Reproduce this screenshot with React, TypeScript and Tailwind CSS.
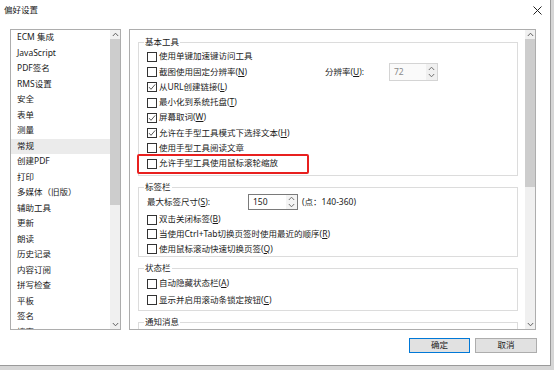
import React from 'react';

const font = "font-['Noto_Sans','Noto_Sans_CJK_SC',sans-serif]";

const navItems = [
  'ECM 集成', 'JavaScript', 'PDF签名', 'RMS设置', '安全', '表单', '测量', '常规', '创建PDF', '打印',
  '多媒体（旧版）', '辅助工具', '更新', '朗读', '历史记录', '内容订阅', '拼写检查', '平板', '签名', '搜索',
];

const Chevron: React.FC<{ up?: boolean; color?: string }> = ({ up, color = '#606060' }) => (
  <svg width="7" height="5" viewBox="0 0 7 5">
    <polyline
      points={up ? '0.8,4 3.5,1.2 6.2,4' : '0.8,1 3.5,3.8 6.2,1'}
      fill="none"
      stroke={color}
      strokeWidth="1"
    />
  </svg>
);

const CheckBox: React.FC<{ checked?: boolean }> = ({ checked }) => (
  <span className="w-[10px] h-[10px] shrink-0 border border-[#333] bg-white flex items-center justify-center">
    {checked && (
      <svg width="8" height="8" viewBox="0 0 8 8">
        <path d="M1 4.1 L3 6.3 L7.2 1.4" fill="none" stroke="#444" strokeWidth="0.9" />
      </svg>
    )}
  </span>
);

// text with the access key underlined, e.g. 截图使用固定分辨率(N)
const Label: React.FC<{ text: string; hotkey?: string; className?: string }> = ({ text, hotkey, className = '' }) => (
  <span className={`whitespace-nowrap ${className}`}>
    {text}
    {hotkey && (
      <>
        (<span className="underline underline-offset-1">{hotkey}</span>)
      </>
    )}
  </span>
);

const Option: React.FC<{ text: string; hotkey?: string; checked?: boolean; h?: string; labelClass?: string; children?: React.ReactNode }> = ({
  text,
  hotkey,
  checked,
  h = 'h-[15.3px]',
  labelClass,
  children,
}) => (
  <div className={`flex items-center gap-[2px] ${h}`}>
    <CheckBox checked={checked} />
    <Label text={text} hotkey={hotkey} className={labelClass} />
    {children}
  </div>
);

const SpinBox: React.FC<{ value: string; disabled?: boolean; w: string; h: string }> = ({ value, disabled, w, h }) => (
  <div
    className={`${w} ${h} shrink-0 flex border ${
      disabled ? 'border-[#d4d4d4] bg-[#fafafa] text-[#8a8a8a]' : 'border-[#7a7a7a] bg-white text-[#1a1a1a]'
    }`}
  >
    <span className="flex-1 flex items-center pl-[4px]">{value}</span>
    <span className={`w-[11px] flex flex-col items-center justify-center gap-[2px] ${disabled ? 'bg-[#f0f0f0]' : 'bg-[#f4f4f4]'}`}>
      <Chevron up color="#707070" />
      <Chevron color="#707070" />
    </span>
  </div>
);

const Group: React.FC<{ title: string; className?: string; children?: React.ReactNode }> = ({ title, className = '', children }) => (
  <fieldset className={`border border-[#dcdcdc] px-[8px] ${className}`}>
    <legend className="ml-[-3px] px-[1px] leading-[10px] text-[#1a1a1a]">{title}</legend>
    {children}
  </fieldset>
);

const ScrollBar: React.FC<{ thumb: string }> = ({ thumb }) => (
  <div className="w-[10px] shrink-0 bg-[#f0f0f0] flex flex-col">
    <div className="h-[9px] flex items-center justify-center">
      <Chevron up />
    </div>
    <div className="flex-1">
      <div className={`${thumb} bg-[#cdcdcd]`} />
    </div>
    <div className="h-[10px] flex items-center justify-center">
      <Chevron />
    </div>
  </div>
);

export default function App() {
  return (
    <div className={`w-[554px] h-[370px] bg-[#d6d6d6] overflow-hidden text-[8.5px] text-[#1a1a1a] ${font}`}>
      <div className="w-[551px] h-[366px] bg-white border-r border-b border-[#9a9a9a] flex flex-col">
        {/* title bar */}
        <div className="h-[29px] shrink-0 flex items-start justify-between pl-[4px] pr-[8px] pt-[3px]">
          <span className="text-[8.5px] leading-[14px]">偏好设置</span>
          <svg width="9" height="9" viewBox="0 0 9 9" className="mt-[3px]">
            <path d="M0.5 0.5 L8.5 8.5 M8.5 0.5 L0.5 8.5" stroke="#222" strokeWidth="1" />
          </svg>
        </div>

        {/* body */}
        <div className="h-[301px] shrink-0 flex gap-[8px] pl-[10px]">
          {/* category list */}
          <div className="w-[111px] border border-[#adadad] flex overflow-hidden">
            <div className="flex-1 overflow-hidden">
              {navItems.map(item => (
                <div
                  key={item}
                  className={`h-[15.5px] flex items-center pl-[6px] whitespace-nowrap ${item === '常规' ? 'bg-[#ebebeb]' : ''}`}
                >
                  {item}
                </div>
              ))}
            </div>
            <ScrollBar thumb="h-[166px]" />
          </div>

          {/* settings panel */}
          <div className="w-[407px] border border-[#adadad] flex overflow-hidden">
            <div className="flex-1 overflow-hidden pl-[8px] pr-[7px] pt-[7px] flex flex-col gap-[6px]">
              <Group title="基本工具" className="pt-[2px] pb-[4px]">
                <Option text="使用单键加速键访问工具" />
                <Option text="截图使用固定分辨率" hotkey="N" labelClass="w-[164px] shrink-0">
                  <span className="w-[62px] shrink-0">
                    <Label text="分辨率" hotkey="U" />:
                  </span>
                  <SpinBox value="72" disabled w="w-[49px]" h="h-[18px]" />
                </Option>
                <Option text="从URL创建链接" hotkey="L" checked />
                <Option text="最小化到系统托盘" hotkey="T" />
                <Option text="屏幕取词" hotkey="W" checked />
                <Option text="允许在手型工具模式下选择文本" hotkey="H" checked />
                <Option text="使用手型工具阅读文章" />
                <div className="relative">
                  <Option text="允许手型工具使用鼠标滚轮缩放" />
                  <div className="absolute left-[-10px] top-[-2.5px] w-[172px] h-[20px] border-2 border-[#e8201f] rounded-[2px]" />
                </div>
              </Group>

              <Group title="标签栏" className="pb-[0px]">
                <div className="h-[20px] flex items-center">
                  <span className="w-[101px] shrink-0">
                    <Label text="最大标签尺寸" hotkey="S" />:
                  </span>
                  <SpinBox value="150" w="w-[50px]" h="h-[16px]" />
                  <span className="ml-[4px] whitespace-nowrap">(点：140-360)</span>
                </div>
                <Option text="双击关闭标签" hotkey="B" h="h-[14.7px]" />
                <Option text="当使用Ctrl+Tab切换页签时使用最近的顺序" hotkey="R" h="h-[14.7px]" />
                <Option text="使用鼠标滚动快速切换页签" hotkey="Q" h="h-[14.7px]" />
              </Group>

              <Group title="状态栏" className="pt-[2px] pb-[2px]">
                <Option text="自动隐藏状态栏" hotkey="A" h="h-[16.5px]" />
                <Option text="显示并启用滚动条锁定按钮" hotkey="C" h="h-[16.5px]" />
              </Group>

              <Group title="通知消息" className="h-[40px] shrink-0" />
            </div>
            <ScrollBar thumb="h-[148px]" />
          </div>
        </div>

        {/* buttons */}
        <div className="flex justify-end gap-[5px] pt-[8px] pr-[13px]">
          <button className="w-[61px] h-[15px] border border-[#0078d7] bg-[#e1e1e1] flex items-center justify-center">
            确定
          </button>
          <button className="w-[62px] h-[15px] border border-[#adadad] bg-[#e1e1e1] flex items-center justify-center">
            取消
          </button>
        </div>
      </div>
    </div>
  );
}
